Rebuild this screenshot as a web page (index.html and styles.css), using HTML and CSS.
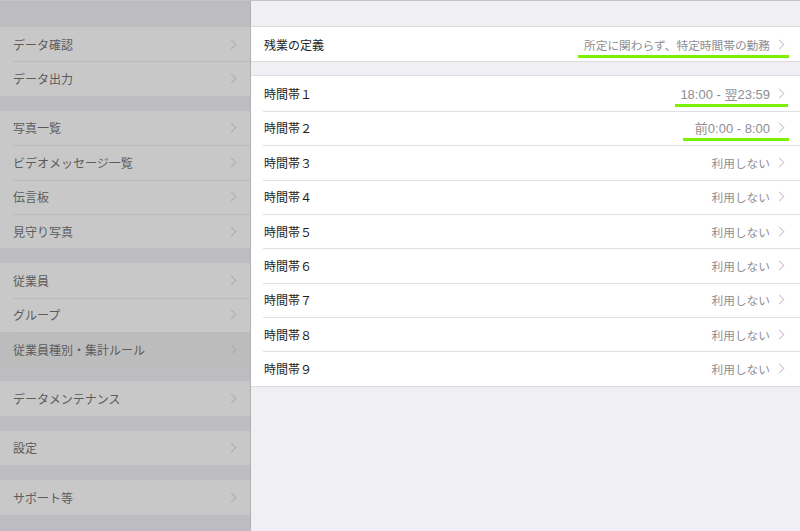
FILE: index.html
```html
<!DOCTYPE html>
<html>
    <head>
        <title>残業の定義</title>
        <link rel="stylesheet" href="styles.css">
    </head>
    <body>
        <div class="split">
            <div class="side">
                <div class="side-head"></div>
                <div class="group">
                    <div class="cell"><span class="label">データ確認</span><span class="chev"></span></div>
                    <div class="cell"><span class="label">データ出力</span><span class="chev"></span></div>
                </div>
                <div class="group">
                    <div class="cell"><span class="label">写真一覧</span><span class="chev"></span></div>
                    <div class="cell"><span class="label">ビデオメッセージ一覧</span><span class="chev"></span></div>
                    <div class="cell"><span class="label">伝言板</span><span class="chev"></span></div>
                    <div class="cell"><span class="label">見守り写真</span><span class="chev"></span></div>
                </div>
                <div class="group">
                    <div class="cell"><span class="label">従業員</span><span class="chev"></span></div>
                    <div class="cell"><span class="label">グループ</span><span class="chev"></span></div>
                    <div class="cell selected"><span class="label">従業員種別・集計ルール</span><span class="chev"></span></div>
                </div>
                <div class="group">
                    <div class="cell"><span class="label">データメンテナンス</span><span class="chev"></span></div>
                </div>
                <div class="group">
                    <div class="cell"><span class="label">設定</span><span class="chev"></span></div>
                </div>
                <div class="group">
                    <div class="cell"><span class="label">サポート等</span><span class="chev"></span></div>
                </div>
            </div>

            <div class="detail">
                <div class="detail-head"></div>
                <div class="group">
                    <div class="cell"><span class="label">残業の定義</span><span class="value mark mark-a">所定に関わらず、特定時間帯の勤務</span><span class="chev"></span></div>
                </div>
                <div class="group">
                    <div class="cell"><span class="label">時間帯１</span><span class="value time mark mark-b">18:00 - 翌23:59</span><span class="chev"></span></div>
                    <div class="cell"><span class="label">時間帯２</span><span class="value time mark mark-c">前0:00 - 8:00</span><span class="chev"></span></div>
                    <div class="cell"><span class="label">時間帯３</span><span class="value">利用しない</span><span class="chev"></span></div>
                    <div class="cell"><span class="label">時間帯４</span><span class="value">利用しない</span><span class="chev"></span></div>
                    <div class="cell"><span class="label">時間帯５</span><span class="value">利用しない</span><span class="chev"></span></div>
                    <div class="cell"><span class="label">時間帯６</span><span class="value">利用しない</span><span class="chev"></span></div>
                    <div class="cell"><span class="label">時間帯７</span><span class="value">利用しない</span><span class="chev"></span></div>
                    <div class="cell"><span class="label">時間帯８</span><span class="value">利用しない</span><span class="chev"></span></div>
                    <div class="cell"><span class="label">時間帯９</span><span class="value">利用しない</span><span class="chev"></span></div>
                </div>
            </div>
        </div>
    </body>
</html>
```

FILE: styles.css
```css
html, body {
    margin: 0;
    height: 100%;
    overflow: hidden;
}
body {
    font-family: "Noto Sans CJK JP", "Liberation Sans", sans-serif;
    font-size: 12px;
    background: #efeff4;
}
.split {
    display: flex;
    height: 531px;
    border-top: 1px solid #c4c4c8;
    box-sizing: border-box;
}
.side {
    width: 250px;
    flex: none;
    background: #bdbdc1;
    border-right: 1px solid #b0b0b3;
    color: #5c5c5c;
}
.detail {
    flex: 1;
    background: #efeff4;
    color: #1e1e1e;
}
.side-head, .detail-head {
    height: 26px;
}
.group {
    margin-bottom: 15px;
}
.cell {
    height: 34.375px;
    box-sizing: border-box;
    display: flex;
    align-items: center;
    padding: 0 15px 0 13px;
    position: relative;
}
.side .cell {
    background: #c8c8c8;
}
.side .cell.selected {
    background: #bcbcbc;
}
.detail .cell {
    background: #fff;
    padding-right: 15px;
}
/* inset separators */
.cell + .cell::before {
    content: "";
    position: absolute;
    left: 13px;
    right: 0;
    top: 0;
    height: 1px;
}
.side .cell + .cell::before {
    background: #bababa;
}
.detail .cell + .cell::before {
    left: 12px;
    background: #e0e0e2;
}
.detail .group {
    box-shadow: 0 -1px 0 #dcdcdf, 0 1px 0 #dcdcdf;
}
.label {
    flex: 1;
    white-space: nowrap;
}
.value {
    font-family: "Liberation Sans", "Noto Sans CJK JP", sans-serif;
    font-size: 11.7px;
    color: #8e8e93;
    margin-right: 6px;
    white-space: nowrap;
    position: relative;
}
.value.time {
    font-size: 13px;
}
.mark::after {
    content: "";
    position: absolute;
    right: -18px;
    bottom: -5px;
    height: 3px;
    background: #7cf000;
}
.mark-a::after {
    left: -6px;
    right: -19px;
}
.mark-b::after {
    left: -5px;
    bottom: -4px;
}
.mark-c::after {
    left: -12px;
    right: -19px;
    bottom: -4px;
}
.chev {
    width: 6px;
    height: 6px;
    border-right: 1.3px solid #c7c7cc;
    border-top: 1.3px solid #c7c7cc;
    transform: rotate(45deg);
    margin-right: 2px;
}
.side .chev {
    border-color: #adadad;
    margin-right: 0;
}
```
